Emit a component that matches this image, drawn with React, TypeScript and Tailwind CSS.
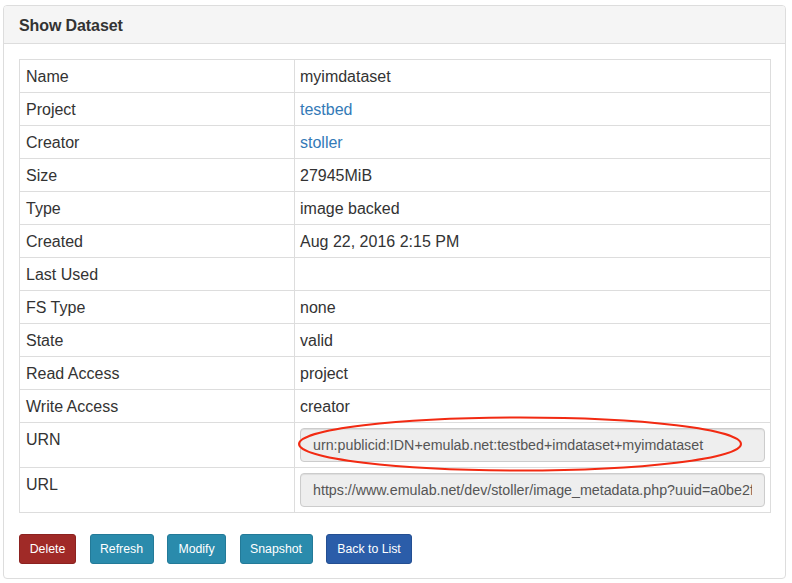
import React from 'react';

const rows: { label: string; value: string; link?: boolean }[] = [
  { label: 'Name', value: 'myimdataset' },
  { label: 'Project', value: 'testbed', link: true },
  { label: 'Creator', value: 'stoller', link: true },
  { label: 'Size', value: '27945MiB' },
  { label: 'Type', value: 'image backed' },
  { label: 'Created', value: 'Aug 22, 2016 2:15 PM' },
  { label: 'Last Used', value: '' },
  { label: 'FS Type', value: 'none' },
  { label: 'State', value: 'valid' },
  { label: 'Read Access', value: 'project' },
  { label: 'Write Access', value: 'creator' },
];

const inputs = [
  { label: 'URN', value: 'urn:publicid:IDN+emulab.net:testbed+imdataset+myimdataset' },
  { label: 'URL', value: 'https://www.emulab.net/dev/stoller/image_metadata.php?uuid=a0be2f6c-68b5-11e6-a8b8-90e2ba22fee4' },
];

export default function App() {
  return (
    <div className="w-[792px] h-[583px] bg-white px-[3px] pt-[5px] font-['Liberation_Sans',Arial,sans-serif] text-[#333]">
      <div className="w-[783px] h-[574px] rounded border border-[#ddd] overflow-hidden">
        {/* Heading */}
        <div className="h-[38px] bg-[#f5f5f5] border-b border-[#ddd] px-[15px] pt-[2px] flex items-center">
          <h3 className="text-[16px] font-bold text-[#333] tracking-[-0.1px]">Show Dataset</h3>
        </div>

        <div className="p-[15px]">
          <table className="w-[752px] border-collapse table-fixed text-[16px] leading-[22px]">
            <colgroup>
              <col className="w-[275px]" />
              <col />
            </colgroup>
            <tbody>
              {rows.map((r) => (
                <tr key={r.label}>
                  <td className="border border-[#ddd] px-[6px] pt-[6px] pb-[4px] align-top">{r.label}</td>
                  <td className="border border-[#ddd] px-[5px] pt-[6px] pb-[4px] align-top">
                    {r.link ? <a className="text-[#337ab7]">{r.value}</a> : r.value}
                  </td>
                </tr>
              ))}
              {inputs.map((r) => (
                <tr key={r.label}>
                  <td className="border border-[#ddd] px-[6px] pt-[6px] pb-[4px] align-top">{r.label}</td>
                  <td className="border border-[#ddd] px-[5px] py-[5px] align-top">
                    <div className="relative">
                      <input
                        readOnly
                        value={r.value}
                        className="w-full h-[34px] rounded bg-[#eee] border border-[#ccc] px-[12px] text-[14.25px] text-[#555] outline-none shadow-[inset_0_1px_1px_rgba(0,0,0,0.075)]"
                      />
                      {r.label === 'URN' && (
                        <svg className="absolute left-[-3px] top-[-13px] pointer-events-none" width="450" height="58" viewBox="0 0 450 58">
                          <ellipse cx="223" cy="29" rx="221" ry="26.5" fill="none" stroke="#f22a12" strokeWidth="2" />
                        </svg>
                      )}
                    </div>
                  </td>
                </tr>
              ))}
            </tbody>
          </table>

          <div className="mt-[21px] flex gap-[13.5px] text-[12.3px] leading-[18px] text-white">
            <button className="h-[30px] w-[57px] rounded-[3px] bg-[#a02a27] border border-[#8c2220]">Delete</button>
            <button className="h-[30px] w-[64px] rounded-[3px] bg-[#2a8bac] border border-[#237a98]">Refresh</button>
            <button className="h-[30px] w-[59px] rounded-[3px] bg-[#2a8bac] border border-[#237a98]">Modify</button>
            <button className="h-[30px] w-[73px] rounded-[3px] bg-[#2a8bac] border border-[#237a98]">Snapshot</button>
            <button className="h-[30px] w-[86px] rounded-[3px] bg-[#2b5da9] border border-[#244f92]">Back to List</button>
          </div>
        </div>
      </div>
    </div>
  );
}
